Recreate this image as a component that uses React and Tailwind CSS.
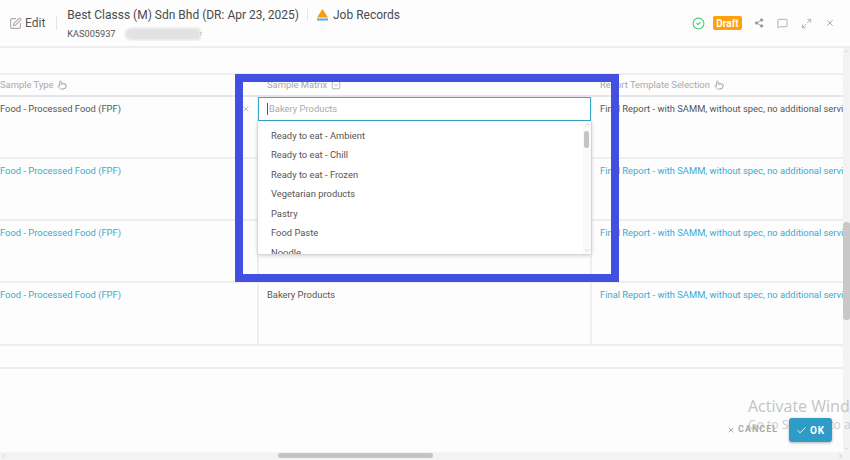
import React from "react";
import { SquarePen, Share2, MessageSquare, Maximize2, X, CircleCheck, Pointer, SquareChevronDown, Check, ChevronLeft, ChevronRight, ChevronUp, ChevronDown } from "lucide-react";

const options = ["Ready to eat - Ambient", "Ready to eat - Chill", "Ready to eat - Frozen", "Vegetarian products", "Pastry", "Food Paste", "Noodle"];
const reportText = "Final Report - with SAMM, without spec, no additional service";

const Row = ({ children, link, tall }) => (
  <div className={`grid grid-cols-[257px_335px_1fr] border-b-2 border-[#eeeeee] ${tall ? "h-[63px]" : "h-[62px]"}`}>
    <div className={`pt-[5px] whitespace-nowrap overflow-hidden ${link ? "text-[#3ba9cf]" : "text-[#555555]"}`}>Food - Processed Food (FPF)</div>
    <div className="border-x-2 border-[#eeeeee] pl-[8px] pt-[5px] text-[#555555]">{children}</div>
    <div className={`pl-[8px] pt-[5px] whitespace-nowrap overflow-hidden ${link ? "text-[#3ba9cf]" : "text-[#555555]"}`}>{reportText}</div>
  </div>
);

const App = () => {
  return (
    <div className="relative w-[850px] h-[460px] overflow-hidden bg-[#fdfdfd] font-['Roboto',sans-serif] text-[9.4px] flex flex-col">
      {/* top bar */}
      <div className="h-[48px] shrink-0 border-b-2 border-[#eeeeee] flex items-center pl-[9px] pr-[15px]">
        <SquarePen size={13} className="text-[#aaaaaa]" />
        <span className="ml-[3px] text-[12px] text-[#555555]">Edit</span>
        <div className="w-px h-[14px] bg-[#e5e5e5] ml-[11px]" />
        <div className="ml-[10px] flex flex-col justify-center">
          <div className="flex items-center h-[20px]">
            <span className="text-[12px] text-[#4a4a4a]">Best Classs (M) Sdn Bhd (DR: Apr 23, 2025)</span>
            <div className="w-px h-[12px] bg-[#e5e5e5] ml-[8px]" />
            <svg width="13" height="14" viewBox="0 0 13 14" className="ml-[8px]">
              <path d="M6.5 1 L12 9.5 H1 Z" fill="#f59e0b" />
              <rect x="1" y="10.5" width="11" height="2" fill="#60a5dc" />
            </svg>
            <span className="ml-[4px] text-[12px] text-[#4a4a4a]">Job Records</span>
          </div>
          <div className="flex items-center h-[14px] mt-[2px]">
            <span className="text-[9.2px] text-[#555555]">KAS005937</span>
            <div className="ml-[9px] w-[75px] h-[12px] rounded-l-full bg-[#e2e2e2] blur-[1px]" />
            <span className="text-[8px] text-[#aaaaaa]">r</span>
          </div>
        </div>
        <div className="ml-auto flex items-center">
          <CircleCheck size={13} className="text-[#3ecb7c]" />
          <span className="ml-[8px] w-[29px] h-[14px] rounded-[2px] bg-[#ff9f0a] text-white font-bold text-[10px] flex items-center justify-center">Draft</span>
          <Share2 size={10} fill="#999999" className="ml-[12px] text-[#999999]" />
          <MessageSquare size={11} className="ml-[13px] text-[#aaaaaa]" />
          <Maximize2 size={11} className="ml-[13px] text-[#aaaaaa]" />
          <X size={10} className="ml-[13px] text-[#999999]" />
        </div>
      </div>

      <div className="flex-1 min-h-0 flex">
        <div className="w-[843px] flex flex-col overflow-hidden">
          {/* blank strip above the table */}
          <div className="h-[27px] shrink-0 border-b-2 border-[#eeeeee]" />
          {/* column heads */}
          <div className="grid grid-cols-[257px_335px_1fr] h-[22px] shrink-0 items-center border-b-2 border-[#e6e6e6] text-[#a8a8a8]">
            <div className="flex items-center gap-[4px]">Sample Type <Pointer size={10} /></div>
            <div className="pl-[10px] flex items-center gap-[4px]">Sample Matrix <SquareChevronDown size={10} /></div>
            <div className="pl-[8px] flex items-center gap-[4px]">Report Template Selection <Pointer size={10} /></div>
          </div>
          <Row />
          <Row link />
          <Row link />
          <Row link tall>Bakery Products</Row>
          <div className="h-[23px] shrink-0 border-b-2 border-[#eeeeee]" />
        </div>
        {/* right scrollbar */}
        <div className="w-[7px] bg-[#f3f3f3] relative flex flex-col justify-between items-center">
          <ChevronUp size={7} className="text-[#bbbbbb]" />
          <ChevronDown size={7} className="text-[#bbbbbb]" />
          <div className="absolute left-0 top-[174px] w-[7px] h-[98px] rounded-[3px] bg-[#c8c8c8]" />
        </div>
      </div>

      {/* bottom scrollbar */}
      <div className="h-[8px] shrink-0 bg-[#f3f3f3] flex items-center justify-between relative">
        <ChevronLeft size={7} className="text-[#bbbbbb]" />
        <ChevronRight size={7} className="text-[#aaaaaa] mr-[6px]" />
        <div className="absolute left-[278px] top-[1px] w-[155px] h-[5px] rounded-[3px] bg-[#c4c4c4]" />
      </div>

      {/* open select editor */}
      <span className="absolute left-[242px] top-[105px] text-[#999999]"><X size={8} /></span>
      <div className="absolute left-[258px] top-[97px] w-[333px] h-[24px] border border-[#3ba9cf] bg-white flex items-center pl-[8px] text-[#aaaaaa]">
        <span className="w-px h-[12px] bg-[#555555] mr-px" />Bakery Products
      </div>
      <div className="absolute left-[258px] top-[121px] w-[333px] h-[133px] bg-white shadow-[0_1px_4px_rgba(0,0,0,0.25)] overflow-hidden">
        <div className="pt-[5px] pl-[13px] text-[#555555]">
          {options.map((o) => (
            <div key={o} className="h-[19.5px] flex items-center whitespace-nowrap">{o}</div>
          ))}
        </div>
        <div className="absolute right-0 top-0 w-[8px] h-full bg-[#fafafa] flex flex-col justify-between items-center">
          <ChevronUp size={7} className="text-[#bbbbbb]" />
          <ChevronDown size={7} className="text-[#bbbbbb]" />
          <div className="absolute left-[1px] top-[10px] w-[5px] h-[17px] rounded-[3px] bg-[#c4c4c4]" />
        </div>
      </div>

      {/* highlight box on top of the screenshot */}
      <div className="absolute left-[235px] top-[74px] w-[384px] h-[208px] border-[8px] border-[#4150e0] pointer-events-none" />

      {/* windows watermark */}
      <div className="absolute left-[748px] top-[396px] text-[16px] leading-[20px] text-[#c4c4c4] whitespace-nowrap font-['Open_Sans',sans-serif]">Activate Windows</div>
      <div className="absolute left-[748px] top-[418px] text-[12px] leading-[14px] text-[#cccccc] whitespace-nowrap font-['Open_Sans',sans-serif]">Go to Settings to activate</div>

      {/* dialog actions */}
      <div className="absolute left-[727px] top-[418px] flex items-center">
        <div className="flex items-center gap-[3px] text-[#aaaaaa] font-bold text-[9px] tracking-[1px]"><X size={8} strokeWidth={3} />CANCEL</div>
        <div className="ml-[11px] w-[43px] h-[24px] rounded-[3px] bg-[#2e9cc7] text-white font-bold text-[10px] tracking-[1px] flex items-center justify-center gap-[3px] shadow-[0_1px_3px_rgba(0,0,0,0.3)]"><Check size={11} />OK</div>
      </div>
    </div>
  );
};

export default App;
